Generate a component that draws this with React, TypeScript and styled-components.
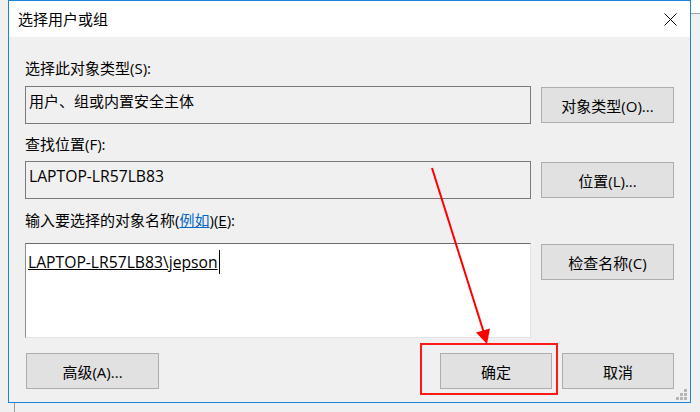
import React from "react";
import styled, { createGlobalStyle } from "styled-components";

const GlobalStyle = createGlobalStyle`
  html, body { margin: 0; padding: 0; background: #f0f0f0; }
  * { box-sizing: border-box; }
`;

const FONT = `"Open Sans", "Noto Sans CJK SC", sans-serif`;

const Stage = styled.div`
  position: relative;
  width: 700px;
  height: 412px;
  overflow: hidden;
  background: #f0f0f0;
  padding-left: 8px;
  font-family: ${FONT};
`;

const BackWindowRight = styled.div`
  position: absolute;
  left: 691px;
  top: 0;
  width: 9px;
  height: 14px;
  background: #ffffff;
  border-bottom: 1px solid #a3a3a3;
`;

const BackWindowBottom = styled.div`
  position: absolute;
  left: 14px;
  top: 403px;
  width: 1px;
  height: 9px;
  background: #9c9c9c;
`;

const Window = styled.div`
  position: relative;
  width: 683px;
  height: 403px;
  border: 1px solid #1c84d8;
  background: #f0f0f0;
  display: flex;
  flex-direction: column;
`;

const TitleBar = styled.div`
  height: 36px;
  background: #ffffff;
  display: flex;
  align-items: center;
  padding-left: 9px;
`;

const Title = styled.div`
  flex: 1;
  font-size: 15px;
  color: #000;
  line-height: 20px;
`;

const CloseButton = styled.div`
  width: 40px;
  height: 36px;
  display: flex;
  align-items: center;
  justify-content: center;
`;

const Body = styled.div`
  flex: 1;
  padding: 21px 16px 0 16px;
  display: flex;
  flex-direction: column;
`;

const Label = styled.div<{ $mt?: number }>`
  font-size: 15px;
  line-height: 20px;
  height: 20px;
  color: #000;
  margin-top: ${(p) => p.$mt ?? 0}px;
  white-space: nowrap;
`;

const Link = styled.span`
  color: #0066cc;
  text-decoration: underline;
`;

const Access = styled.span`
  text-decoration: underline;
`;

const Row = styled.div<{ $mt?: number }>`
  display: grid;
  grid-template-columns: 506px 133px;
  column-gap: 10px;
  align-items: start;
  margin-top: ${(p) => p.$mt ?? 0}px;
`;

const ReadField = styled.div`
  height: 38px;
  border: 1px solid #7a7a7a;
  background: #f0f0f0;
  padding: 4px 3px 0;
  font-size: 15px;
  line-height: 20px;
  color: #000;
  white-space: nowrap;
`;

const Latin = styled.span`
  font-size: 15.7px;
`;

const EditField = styled.div`
  height: 95px;
  background: #ffffff;
  border-top: 1px solid #6a6a6a;
  border-left: 1px solid #8c8c8c;
  border-right: 1px solid #e3e3e3;
  border-bottom: 1px solid #e3e3e3;
  padding: 3px 2px 0;
  font-size: 15px;
  line-height: 24px;
  color: #000;
  display: flex;
  align-items: center;
  height: 95px;
  white-space: nowrap;
`;

const EditLine = styled.div`
  display: flex;
  align-items: center;
  height: 30px;
  align-self: flex-start;
`;

const Typed = styled.span`
  text-decoration: underline;
  font-size: 15.7px;
`;

const Caret = styled.span`
  display: inline-block;
  width: 1px;
  height: 24px;
  background: #000;
  margin-left: 1px;
`;

const Button = styled.div<{ $w?: number; $mt?: number }>`
  width: ${(p) => p.$w ?? 133}px;
  height: 36px;
  margin-top: ${(p) => p.$mt ?? 0}px;
  background: #e1e1e1;
  border: 1px solid #adadad;
  display: flex;
  align-items: center;
  justify-content: center;
  font-size: 15px;
  color: #000;
  white-space: nowrap;
`;

const Footer = styled.div`
  margin-top: 15px;
  padding-left: 1px;
  display: flex;
  align-items: center;
`;

const Spacer = styled.div`
  flex: 1;
`;

const FooterGap = styled.div`
  width: 10px;
`;

const Highlight = styled.div`
  position: absolute;
  left: 411px;
  top: 342px;
  width: 138px;
  height: 52px;
  border: 2px solid #ff1a1a;
  pointer-events: none;
`;

const Annotation = styled.svg`
  position: absolute;
  left: 0;
  top: 0;
  pointer-events: none;
`;

const Grip = styled.svg`
  position: absolute;
  right: 2px;
  bottom: 1px;
`;

export default function App() {
  return (
    <>
      <GlobalStyle />
      <Stage>
        <BackWindowRight />
        <BackWindowBottom />
        <Window>
          <TitleBar>
            <Title>选择用户或组</Title>
            <CloseButton>
              <svg width="13" height="13" viewBox="0 0 13 13">
                <path d="M0.5 0.5 L12.5 12.5 M12.5 0.5 L0.5 12.5" stroke="#000" strokeWidth="1" fill="none" />
              </svg>
            </CloseButton>
          </TitleBar>
          <Body>
            <Label>选择此对象类型(S):</Label>
            <Row $mt={8}>
              <ReadField>用户、组或内置安全主体</ReadField>
              <Button $mt={1}>对象类型(O)...</Button>
            </Row>
            <Label $mt={10}>查找位置(F):</Label>
            <Row $mt={7}>
              <ReadField>
                <Latin>LAPTOP-LR57LB83</Latin>
              </ReadField>
              <Button $mt={1}>位置(L)...</Button>
            </Row>
            <Label $mt={11}>
              输入要选择的对象名称(<Link>例如</Link>)(<Access>E</Access>):
            </Label>
            <Row $mt={13}>
              <EditField>
                <EditLine>
                  <Typed>LAPTOP-LR57LB83\jepson</Typed>
                  <Caret />
                </EditLine>
              </EditField>
              <Button $mt={1}>检查名称(C)</Button>
            </Row>
            <Footer>
              <Button $w={133}>高级(A)...</Button>
              <Spacer />
              <Button $w={112}>确定</Button>
              <FooterGap />
              <Button $w={112}>取消</Button>
            </Footer>
          </Body>
          <Highlight />
          <Grip width="12" height="12" viewBox="0 0 12 12">
            <g fill="#b5b5b5">
              <rect x="8" y="0" width="3" height="3" />
              <rect x="4" y="4" width="3" height="3" />
              <rect x="8" y="4" width="3" height="3" />
              <rect x="0" y="8" width="3" height="3" />
              <rect x="4" y="8" width="3" height="3" />
              <rect x="8" y="8" width="3" height="3" />
            </g>
          </Grip>
        </Window>
        <Annotation width="700" height="412" viewBox="0 0 700 412">
          <line x1="432" y1="168" x2="484" y2="333" stroke="#ff0000" strokeWidth="2" />
          <polygon points="487,344 476,332.5 490,328.5" fill="#ff0000" />
        </Annotation>
      </Stage>
    </>
  );
}
